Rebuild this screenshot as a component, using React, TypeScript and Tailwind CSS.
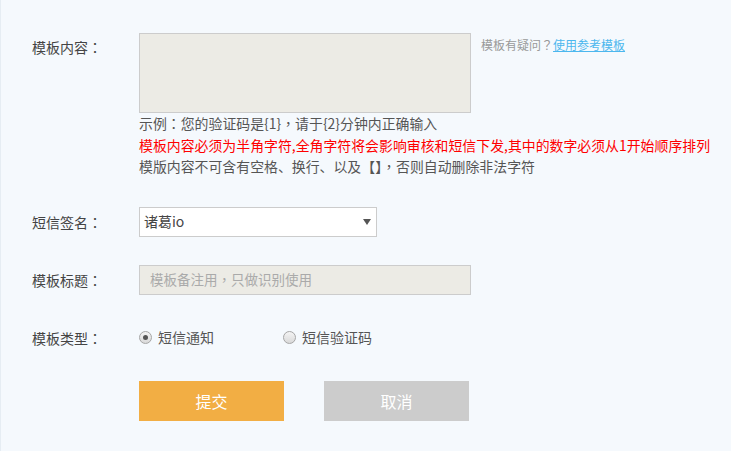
import React from "react";

const font = { fontFamily: '"Noto Sans CJK SC", "Noto Sans", sans-serif' };
const jp = { fontFamily: '"Noto Sans CJK JP", sans-serif' };
const tc = { fontFamily: '"Noto Sans CJK TC", sans-serif' };

function Colon() {
  return <span style={jp}>：</span>;
}

function Comma() {
  return <span style={tc}>，</span>;
}

function Radio({ checked }: { checked?: boolean }) {
  return (
    <span className="relative inline-flex h-[13px] w-[13px] items-center justify-center rounded-full border border-[#a6a6a6] bg-gradient-to-b from-[#f4f4f4] to-[#d9d9d9]">
      {checked && <span className="h-[5px] w-[5px] rounded-full bg-[#555]" />}
    </span>
  );
}

export default function App() {
  return (
    <div
      style={font}
      className="h-[451px] w-[731px] overflow-hidden border-l border-[#e6edf3] bg-[#f5f9fd] pl-[31px] pt-[33px] text-[14px] text-[#555]"
    >
      {/* 模板内容 */}
      <div className="flex">
        <div className="w-[107px] pt-[4px] leading-[20px] text-[#444]">模板内容<Colon /></div>
        <div>
          <div className="flex items-start">
            <div className="h-[80px] w-[332px] border border-[#cccccc] bg-[#ecebe5]" />
            <div className="ml-[10px] pt-[3px] text-[12px] leading-[18px] text-[#999]">
              模板有疑问<span style={jp}>？</span>
              <a className="text-[#4cb7ee] underline">使用参考模板</a>
            </div>
          </div>
          <div className="text-[13.9px] leading-[21.5px]">
            <div>示例<Colon />您的验证码是{"{1}"}<Comma />请于{"{2}"}分钟内正确输入</div>
            <div className="whitespace-nowrap text-[#ff0000]">
              模板内容必须为半角字符,全角字符将会影响审核和短信下发,其中的数字必须从1开始顺序排列
            </div>
            <div>模版内容不可含有空格、换行、以及【】<Comma />否则自动删除非法字符</div>
          </div>
        </div>
      </div>

      {/* 短信签名 */}
      <div className="mt-[29px] flex items-center">
        <div className="w-[107px] leading-[20px] text-[#444]">短信签名<Colon /></div>
        <div className="flex h-[30px] w-[238px] items-center justify-between border border-[#cccccc] bg-white pl-[4px] pr-[5px]">
          <span className="text-[14px] text-[#444]">诸葛io</span>
          <svg width="8" height="6" viewBox="0 0 8 6">
            <path d="M0 0 H8 L4 6 Z" fill="#555" />
          </svg>
        </div>
      </div>

      {/* 模板标题 */}
      <div className="mt-[28px] flex items-center">
        <div className="w-[107px] leading-[20px] text-[#444]">模板标题<Colon /></div>
        <div className="flex h-[30px] w-[332px] items-center border border-[#cccccc] bg-[#ecebe5] pl-[10px]">
          <span className="text-[13.5px] text-[#aaa]">模板备注用<Comma />只做识别使用</span>
        </div>
      </div>

      {/* 模板类型 */}
      <div className="mt-[33px] flex h-[20px] items-center">
        <div className="w-[107px] leading-[20px] text-[#444]">模板类型<Colon /></div>
        <div className="flex items-center">
          <Radio checked />
          <span className="ml-[6px]">短信通知</span>
        </div>
        <div className="ml-[69px] flex items-center">
          <Radio />
          <span className="ml-[6px]">短信验证码</span>
        </div>
      </div>

      {/* Buttons */}
      <div className="mt-[33px] flex pl-[107px]">
        <button className="h-[40px] w-[145px] bg-[#f2ae44] text-[16px] text-white">提交</button>
        <button className="ml-[40px] h-[40px] w-[145px] bg-[#cccccc] text-[16px] text-white">取消</button>
      </div>
    </div>
  );
}
